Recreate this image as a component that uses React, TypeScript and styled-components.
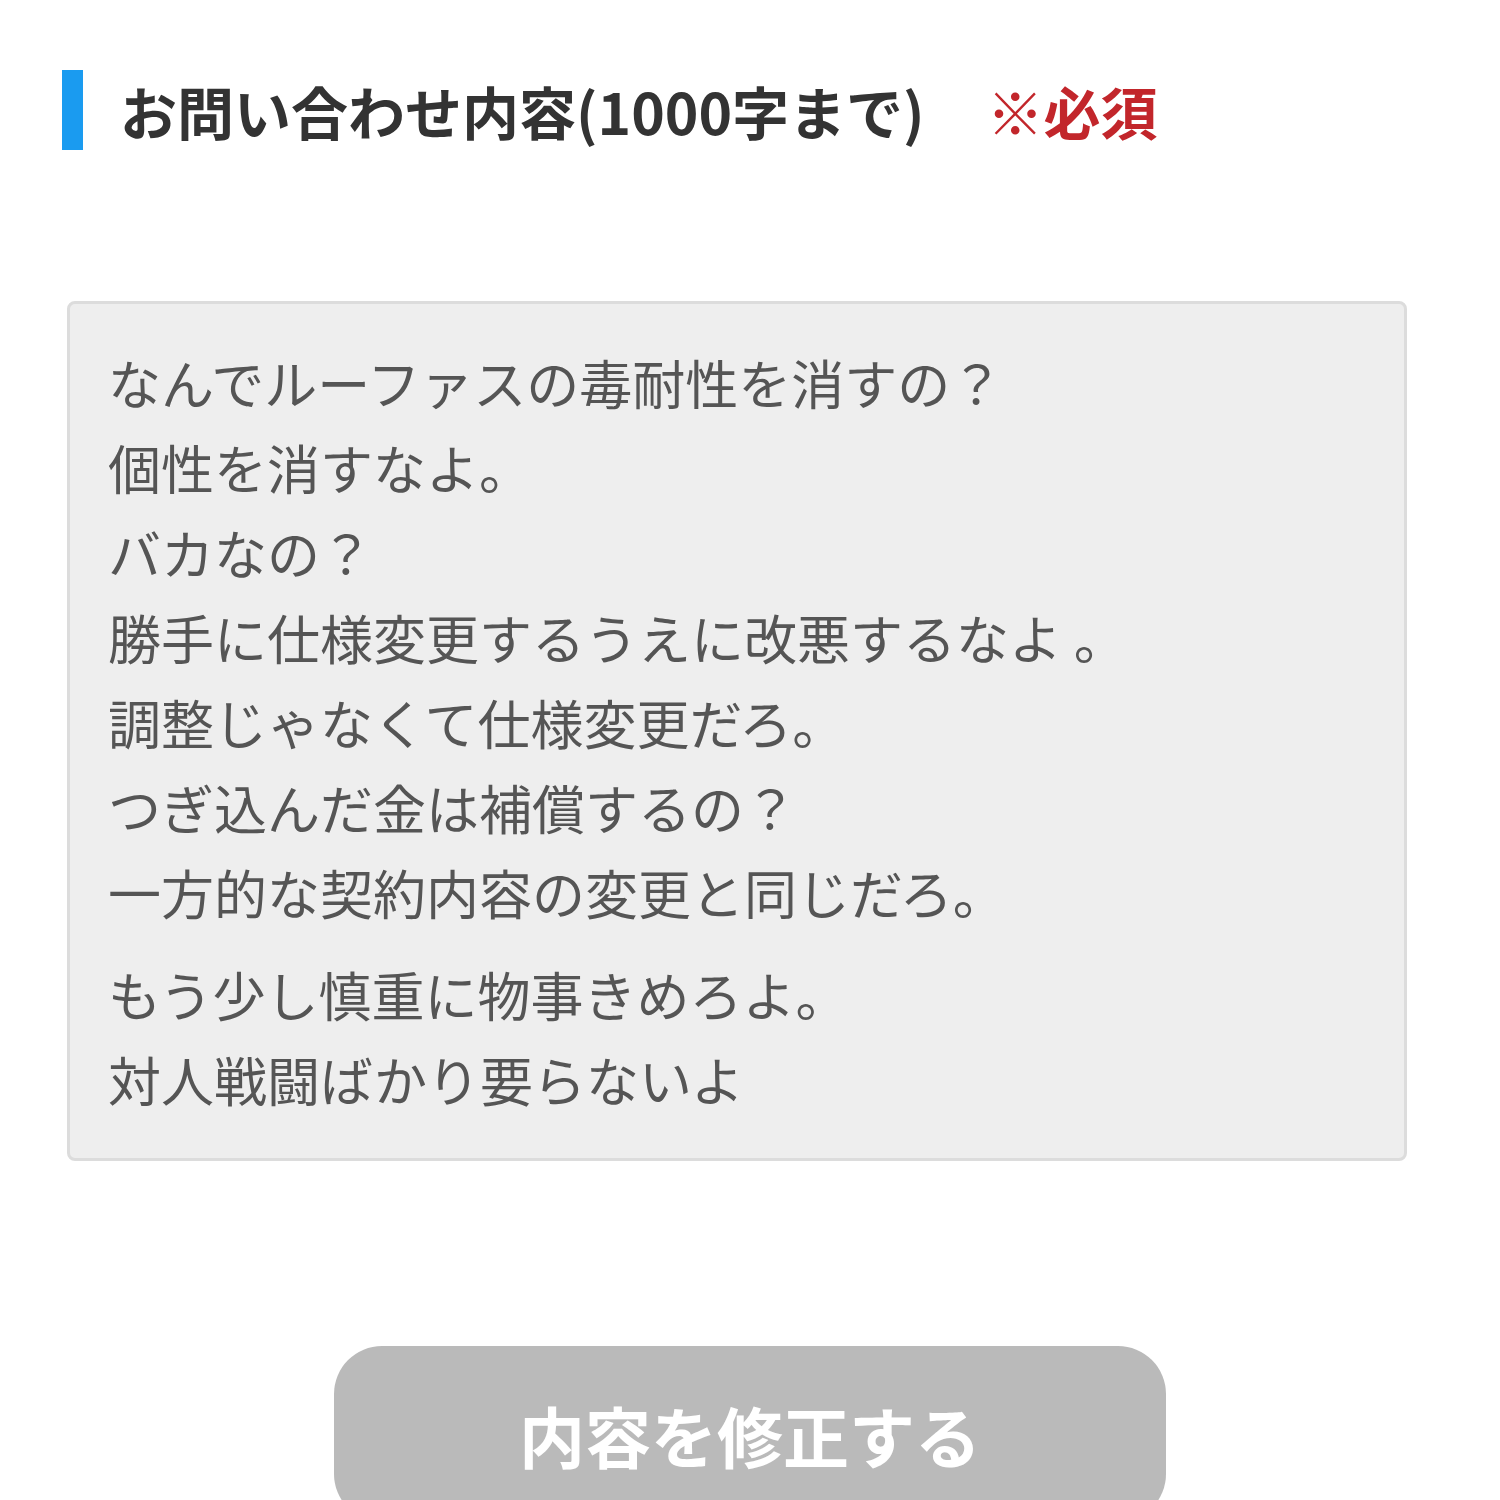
import React from "react";
import styled, { createGlobalStyle } from "styled-components";

const GlobalStyle = createGlobalStyle`
  html, body {
    margin: 0;
    padding: 0;
    background: #ffffff;
  }
  body {
    font-family: "Noto Sans CJK JP", "Noto Sans", sans-serif;
  }
`;

const Page = styled.div`
  width: 1500px;
  height: 1500px;
  overflow: hidden;
  display: flex;
  flex-direction: column;
  padding-top: 70px;
  box-sizing: border-box;
`;

const Header = styled.div`
  display: flex;
  align-items: center;
  height: 80px;
  margin-left: 62px;
`;

const Bar = styled.span`
  width: 21px;
  height: 80px;
  background: #1a9bf0;
  flex-shrink: 0;
`;

const Title = styled.h2`
  margin: 0 0 0 37px;
  font-size: 57px;
  font-weight: 700;
  color: #333333;
  line-height: 1;
`;

const Required = styled.span`
  margin-left: 62px;
  font-size: 57px;
  font-weight: 700;
  color: #c2262b;
  line-height: 1;
`;

const MessageBox = styled.div`
  margin: 151px 0 0 67px;
  width: 1340px;
  height: 862px;
  box-sizing: border-box;
  background: #eeeeee;
  border: 3px solid #dcdcdc;
  border-radius: 8px;
  padding: 36px 38px;
  display: flex;
  flex-direction: column;
`;

const Line = styled.div<{ $gap?: number }>`
  font-size: 53px;
  line-height: 85px;
  color: #555555;
  white-space: nowrap;
  margin-top: ${({ $gap }) => $gap ?? 0}px;
`;

const SubmitButton = styled.button`
  margin: 185px 0 0 334px;
  width: 832px;
  height: 176px;
  flex-shrink: 0;
  border: none;
  border-radius: 48px;
  background: #bababa;
  color: #ffffff;
  font-family: "Noto Sans CJK JP", sans-serif;
  font-size: 66px;
  font-weight: 700;
  display: flex;
  align-items: center;
  justify-content: center;
  padding: 0;
`;

const lines: { text: string; gap?: number }[] = [
  { text: "なんでルーファスの毒耐性を消すの？" },
  { text: "個性を消すなよ。" },
  { text: "バカなの？" },
  { text: "勝手に仕様変更するうえに改悪するなよ 。" },
  { text: "調整じゃなくて仕様変更だろ。" },
  { text: "つぎ込んだ金は補償するの？" },
  { text: "一方的な契約内容の変更と同じだろ。" },
  { text: "もう少し慎重に物事きめろよ。", gap: 17 },
  { text: "対人戦闘ばかり要らないよ" },
];

export default function App() {
  return (
    <>
      <GlobalStyle />
      <Page>
        <Header>
          <Bar />
          <Title>お問い合わせ内容(1000字まで)</Title>
          <Required>※必須</Required>
        </Header>
        <MessageBox>
          {lines.map((l, i) => (
            <Line key={i} $gap={l.gap}>
              {l.text}
            </Line>
          ))}
        </MessageBox>
        <SubmitButton type="button">内容を修正する</SubmitButton>
      </Page>
    </>
  );
}
